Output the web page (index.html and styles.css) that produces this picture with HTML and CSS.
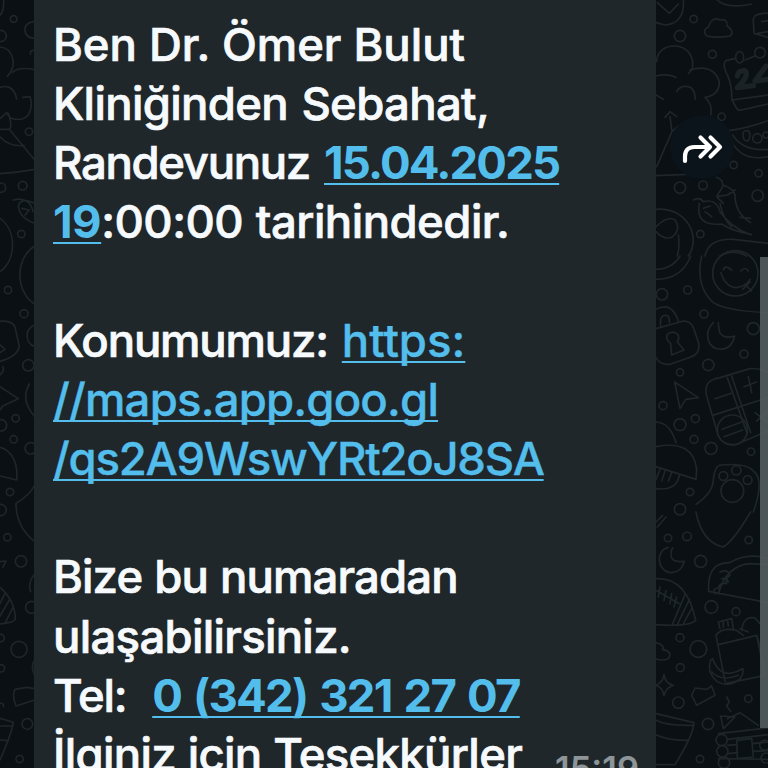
FILE: index.html
```
<!DOCTYPE html>
<html lang="tr">
<head>
<meta charset="utf-8">
<title>Mesaj</title>
<link rel="stylesheet" href="styles.css">
</head>
<body>
<main class="chat">
  <svg class="wallpaper" viewBox="0 0 768 768" aria-hidden="true">
    <g transform="scale(.33333)">
      <circle cx="41" cy="57" r="10"/><circle cx="2" cy="108" r="17"/><path d="M11 0Q12 35 0 45M100 65Q72 70 75 92Q76 112 104 116M104 151Q88 150 92 162"/>
      <path d="M0 141C45 145 50 205 22 229M38 217Q55 199 104 209M0 262Q40 250 50 297M68 292L90 290Q100 318 85 345Q65 367 30 353L20 338L0 356M25 340Q38 380 28 388L0 388M28 388L104 480M0 410Q25 440 72 437M0 521Q50 518 104 508"/>
      <circle cx="87" cy="395" r="11"/><circle cx="68" cy="557" r="13"/><circle cx="3" cy="563" r="14"/><circle cx="64" cy="702" r="11"/><path d="M40 600C75 590 95 610 99 635M104 610Q60 590 55 620Q60 655 104 670M65 625L88 630L75 645"/>
      <path d="M0 655C50 690 50 780 0 815M104 738C40 780 50 880 104 912M0 964Q40 960 46 985L58 1040Q50 1070 0 1084M0 1035L15 1048L0 1058M104 975C70 990 78 1030 104 1040"/>
      <circle cx="24" cy="870" r="11"/><circle cx="72" cy="941" r="12"/><circle cx="85" cy="1096" r="17"/><path d="M0 1125Q15 1110 8 1100"/>
      <path d="M0 1160L55 1196L8 1218L0 1230M88 1152Q60 1200 104 1250M0 1342C35 1350 55 1390 50 1440L0 1428M104 1455Q90 1485 48 1510Q48 1580 104 1625"/>
      <circle cx="47" cy="1255" r="11"/><circle cx="3" cy="1276" r="17"/><circle cx="41" cy="1318" r="11"/><circle cx="92" cy="1345" r="17"/><circle cx="30" cy="1476" r="11"/><circle cx="2" cy="1530" r="17"/><circle cx="22" cy="1612" r="11"/><circle cx="63" cy="1684" r="17"/>
      <path d="M0 1685L18 1683L8 1702M0 1762Q44 1800 46 1855Q46 1868 0 1872M15 1780L0 1810M28 1800L0 1848M40 1820L15 1870M104 1722Q82 1750 92 1775M104 1980Q90 2000 104 2025"/>
      <circle cx="95" cy="1822" r="18"/><circle cx="57" cy="1948" r="24"/><circle cx="2" cy="1914" r="11"/><circle cx="3" cy="2005" r="11"/><circle cx="82" cy="2172" r="16"/><circle cx="59" cy="2277" r="11"/>
      <path d="M45 2068L80 2062L104 2066M45 2068Q35 2085 48 2118L104 2100M0 2155L40 2167Q35 2200 0 2280M0 2178L38 2178M0 2220L25 2222M0 2110Q12 2108 10 2120"/>
    </g>
    <g transform="translate(640 0) scale(.33333)">
      <path d="M130 0Q135 70 75 75L48 68M52 8L88 40L115 12M232 0Q260 28 335 12M200 108Q185 90 205 82Q215 48 240 60Q262 55 262 78Q285 95 270 108Q230 115 200 108ZM384 40Q340 38 340 60L342 100L384 112M365 65L384 62M352 100L384 95"/>
      <circle cx="161" cy="57" r="11"/><circle cx="120" cy="108" r="17"/><circle cx="217" cy="163" r="12"/>
      <path d="M50 185C50 120 165 120 158 200Q155 215 145 220M48 228Q80 220 108 232M150 210Q220 190 238 245Q238 285 195 292Q220 315 212 345M110 275Q120 255 145 260Q165 265 166 298M48 285L70 298M75 352L90 335L110 350M90 350L96 395L50 500M96 395L125 370M48 527L145 523"/>
      <path d="M258 182Q245 190 262 225Q275 250 276 300L290 325Q294 332 305 330L384 312M276 300L384 285M258 182L285 175M315 180L345 168"/><ellipse cx="299" cy="172" rx="12" ry="17"/><circle cx="360" cy="158" r="16"/>
      <g class="digits"><path d="M292 228Q295 210 315 212Q330 225 292 263L340 257M378 198L345 243L384 238"/></g>
      <circle cx="245" cy="350" r="11"/><path d="M265 392Q320 385 384 362M278 430Q310 485 384 470M278 405Q310 455 384 448M310 410Q305 390 325 392Q335 405 325 422Q310 425 310 410Z"/><circle cx="352" cy="415" r="14"/><circle cx="378" cy="405" r="9"/>
      <circle cx="281" cy="495" r="11"/><circle cx="356" cy="520" r="11"/><circle cx="120" cy="563" r="17"/><circle cx="189" cy="556" r="13"/><circle cx="353" cy="587" r="17"/><circle cx="181" cy="702" r="11"/>
      <path d="M160 600Q180 590 190 605Q230 595 240 635Q270 680 332 704M178 610Q165 680 245 672Q270 690 335 704M195 635L215 650M190 625L210 618M230 532Q250 540 248 555Q280 565 285 585Q285 640 332 668M248 560L230 590L250 610M230 590L262 585L285 570M240 610Q250 660 275 680M300 652L332 655"/>
      <path d="M48 628C140 620 185 710 145 768M48 695Q70 720 95 712Q125 690 105 660Q85 645 48 680M115 705Q120 740 112 768M195 768Q205 715 280 718L384 730M240 768Q280 745 320 768"/>
    </g>
    <g transform="translate(640 256) scale(.33333)">
      <path d="M48 70Q125 70 152 0M48 40Q95 40 120 0M185 0Q165 90 220 140Q260 165 384 170"/><circle cx="286" cy="52" r="68"/>
      <path d="M243 50Q255 92 290 95Q320 90 330 70M250 42Q255 25 275 42M302 45Q315 30 325 45M315 85L335 105M330 78L308 100"/>
      <circle cx="66" cy="115" r="17"/><circle cx="143" cy="102" r="12"/><circle cx="192" cy="174" r="12"/><circle cx="340" cy="218" r="18"/><circle cx="312" cy="294" r="12"/><circle cx="205" cy="327" r="17"/><circle cx="120" cy="349" r="11"/>
      <path d="M48 160Q95 135 115 195M62 210Q58 175 78 178Q90 180 88 200M48 218L130 195Q155 195 162 220L177 265Q178 295 155 302L90 325Q60 328 48 305M92 262Q75 250 82 235Q100 220 115 238Q118 250 112 258L132 282L95 297Z"/>
      <path d="M220 200C190 230 200 280 245 280Q275 278 284 240Q255 250 240 232Q235 215 235 200M104 378L175 425L137 430L120 458Z"/>
      <path d="M202 385Q195 400 200 420L235 540Q250 570 290 565L384 525M202 385Q210 370 240 365L330 338Q355 335 384 350M275 360L332 530M262 365L322 535M218 478L384 425M225 428L278 410M325 362L335 410M312 392L350 378M345 470L384 500M350 495L384 465"/><circle cx="277" cy="522" r="45"/><path d="M247 520L305 498M252 542L308 522"/>
      <circle cx="69" cy="449" r="12"/><circle cx="166" cy="488" r="12"/><circle cx="120" cy="506" r="18"/><circle cx="162" cy="550" r="12"/><circle cx="213" cy="577" r="18"/><circle cx="333" cy="587" r="11"/><circle cx="150" cy="708" r="11"/><circle cx="120" cy="760" r="17"/>
      <path d="M48 498Q90 500 108 560M48 572Q160 550 170 640L168 670L48 632M60 640L48 670M75 645L65 675M95 650L85 675M118 658Q110 705 48 698M168 745Q220 710 220 670Q225 625 245 627Q320 620 340 645Q375 670 340 768"/>
      <circle cx="277" cy="705" r="34"/><circle cx="250" cy="660" r="13"/><circle cx="289" cy="643" r="14"/><circle cx="323" cy="672" r="13"/>
    </g>
    <g transform="translate(640 512) scale(.33333)">
      <path d="M168 0C180 65 210 95 248 105Q275 95 332 0M48 30L68 10M52 45L78 15M85 106C45 115 50 180 95 182Q125 180 133 148Q105 152 95 138Q90 120 98 108"/>
      <circle cx="84" cy="78" r="11"/><circle cx="141" cy="73" r="13"/><circle cx="326" cy="84" r="11"/><circle cx="182" cy="148" r="18"/><circle cx="214" cy="285" r="19"/><circle cx="288" cy="299" r="12"/><circle cx="120" cy="377" r="12"/><circle cx="175" cy="411" r="25"/><circle cx="121" cy="467" r="12"/><circle cx="115" cy="572" r="17"/><circle cx="325" cy="560" r="11"/><circle cx="204" cy="636" r="17"/><circle cx="180" cy="741" r="11"/>
      <path d="M48 200Q140 195 167 325Q150 345 48 338M135 248L98 335M148 262L112 338M155 290L130 335M48 235L118 275M60 225L55 255M78 235L72 265M95 245L90 275M110 255L102 285"/>
      <path d="M206 238Q200 150 270 152Q320 120 384 140M206 238L384 272M235 245Q260 160 330 155L384 158M240 180Q265 170 270 190Q255 200 260 215Q240 210 235 228Q215 230 225 245M245 200Q260 195 265 210"/>
      <path d="M228 370L255 508M228 370Q245 345 290 355L310 370M235 398L350 370L375 490L255 515M240 350L235 330L275 320L280 350M250 345L250 330M265 342L263 328M305 355Q310 310 345 318L360 335M300 350L325 360M350 370L362 410"/>
      <path d="M48 392Q75 400 68 412Q100 420 85 440Q65 448 48 440M48 520Q70 510 72 488Q75 515 100 520Q75 530 72 552Q68 525 48 520M155 550L165 528L200 532L215 522L225 550L170 580Z"/>
      <path d="M218 440Q205 445 210 480Q230 525 275 515Q315 500 308 470L292 478Q240 500 218 440M215 480Q245 510 295 490M260 555L268 570L260 582L272 598M242 612L250 650L285 615L242 612M262 620L300 602L355 640M48 605L162 632Q160 670 105 758L48 758M48 625Q80 642 160 640M48 668Q80 685 145 685"/>
      <path d="M235 665L384 648M262 682L384 668M235 740L384 742M290 685L335 680L340 735L292 740ZM262 700L290 698M340 695L384 690M340 718L384 716M265 725L292 722"/><circle cx="245" cy="684" r="17"/><circle cx="247" cy="718" r="17"/><circle cx="252" cy="752" r="17"/><circle cx="374" cy="700" r="15"/><circle cx="378" cy="738" r="15"/>
    </g>
  </svg>
  <section class="bubble">
    <p class="line l1">Ben Dr. Ömer Bulut</p>
    <p class="line l2">Kliniğinden Sebahat,</p>
    <p class="line"><span class="l3">Randevunuz </span><a class="link strong date">15.04.2025</a></p>
    <p class="line"><a class="link strong hour">19</a><span class="l4">:00:00 tarihindedir.</span></p>
    <p class="line"></p>
    <p class="line"><span class="l6">Konumumuz: </span><a class="link">https:</a></p>
    <p class="line"><a class="link l7">//maps.app.goo.gl</a></p>
    <p class="line"><a class="link l8">/qs2A9WswYRt2oJ8SA</a></p>
    <p class="line"></p>
    <p class="line l10">Bize bu numaradan</p>
    <p class="line l11">ulaşabilirsiniz.</p>
    <p class="line"><span class="tel">Tel:  </span><a class="link strong phone">0 (342) 321 27 07</a></p>
    <div class="last"><p class="line l13">İlginiz için Teşekkürler</p><time class="time">15:19</time></div>
  </section>
  <aside class="side">
    <button class="forward" aria-label="İlet">
      <svg viewBox="0 0 64 64"><path d="M15 46V41.500Q15 32 24.500 32H40M30.500 22.500L40 32L30.500 41.500M40.500 22.500L50 32L40.500 41.500"/></svg>
    </button>
  </aside>
  <div class="scrollbar"></div>
</main>
</body>
</html>
```
FILE: styles.css
```
* { box-sizing: border-box; }
body { margin: 0; background: #0a1014; }
.chat {
  position: relative;
  display: flex;
  width: 768px;
  height: 768px;
  padding-left: 34px;
  overflow: hidden;
  font-family: Inter, "Noto Sans", sans-serif;
}
.wallpaper {
  position: absolute;
  inset: 0;
  width: 768px;
  height: 768px;
  fill: none;
  stroke: #1f262a;
  stroke-width: 5;
  stroke-linecap: round;
  stroke-linejoin: round;
}
.digits { stroke-width: 16; stroke: #1b2226; }
.bubble {
  position: relative;
  flex: none;
  width: 622px;
  height: 768px;
  padding: 14.8px 17px 0 19px;
  overflow: hidden;
  background: #1f272a;
  color: #f7fafc;
}
.line {
  height: 59.2px;
  margin: 0;
  font-size: 45.5px;
  font-weight: 500;
  line-height: 59.2px;
  white-space: pre;
  -webkit-text-stroke: .7px currentColor;
}
.link {
  color: #53bdeb;
  text-decoration: underline;
  text-decoration-thickness: 2px;
  text-underline-offset: 4px;
  text-decoration-skip-ink: none;
  -webkit-text-stroke-width: .4px;
}
.strong { font-weight: 700; -webkit-text-stroke-width: 0; }
.l1 { letter-spacing: -.03px; }
.l2 { letter-spacing: -.67px; word-spacing: 2px; }
.l3 { letter-spacing: -1.32px; word-spacing: 3.2px; }
.date { letter-spacing: -1.85px; }
.hour { letter-spacing: -.5px; }
.l4 { letter-spacing: -.52px; word-spacing: 1px; }
.l6 { letter-spacing: -1.15px; word-spacing: 2.8px; }
.l7 { letter-spacing: -.81px; }
.l8 { letter-spacing: -1.25px; }
.l10 { letter-spacing: -.88px; word-spacing: .8px; }
.l11 { letter-spacing: -.7px; }
.tel { letter-spacing: -1.2px; word-spacing: 2px; }
.phone { letter-spacing: -1.75px; word-spacing: 2.85px; }
.l13 { letter-spacing: -.7px; word-spacing: .4px; }
.last { display: flex; justify-content: space-between; }
.time {
  padding-top: 15px;
  color: #8d9599;
  font-size: 34.5px;
  font-weight: 600;
  line-height: 58px;
}
.side { position: relative; padding: 115px 0 0 14px; }
.forward {
  display: block;
  width: 64px;
  height: 64px;
  padding: 0;
  border: 0;
  border-radius: 50%;
  background: #0b141a;
}
.forward svg {
  display: block;
  width: 64px;
  height: 64px;
  fill: none;
  stroke: #fff;
  stroke-width: 4.2;
  stroke-linecap: round;
  stroke-linejoin: round;
}
.scrollbar {
  position: absolute;
  top: 257px;
  right: 0;
  width: 8px;
  height: 471px;
  background: rgba(91, 97, 101, .85);
}
```
